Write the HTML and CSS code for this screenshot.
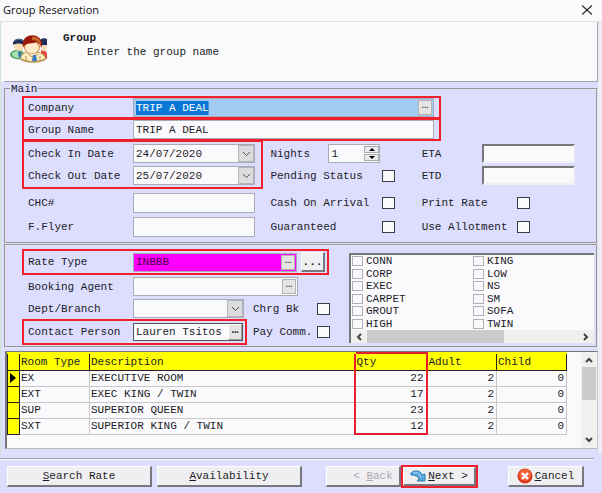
FILE: index.html
```
<!DOCTYPE html>
<html lang="en">
<head>
<meta charset="utf-8">
<title>Group Reservation</title>
<link rel="stylesheet" href="styles.css">
</head>
<body>
<div class="window">
  <header class="titlebar">
    <h1>Group Reservation</h1>
    <button class="close" type="button" aria-label="Close"><svg width="10" height="10" viewBox="0 0 10 10"><path d="M0 .5 10 9.500M10 .5 0 9.500" fill="none" stroke="#222" stroke-width="1.200"/></svg></button>
  </header>
  <div class="frame">
    <section class="intro">
      <svg class="people" width="37" height="28" viewBox="0 0 37 28" aria-hidden="true">
        <path d="M0 20c0-3 3-5 8-5s7 3 7 8c-4 2-13 2-15-3z" fill="#4da566"/>
        <path d="M2 20c0-3 3-4 6-4l3 6c-3 2-7 1-9-2z" fill="#a8dfb0"/>
        <circle cx="9" cy="11" r="5" fill="#f9dcb4"/>
        <path d="M3 10C2 2 14 2 15 8l-1 2c-3-2-8-2-11 0z" fill="#1c2f5c"/>
        <path d="M5 6c2-2 6-2 8 0" fill="none" stroke="#5470a0"/>
        <path d="M8 17l1 6 3-1-2-5z" fill="#2a74bd"/>
        <path d="M31 15c3 0 5 1 6 3v6h-6z" fill="#e04a3c"/>
        <path d="M31 7h6v8l-5 1z" fill="#f9dcb8"/>
        <path d="M30 5c2-2 5-2 7-1v6l-7 0z" fill="#1c2f5c"/>
        <path d="M10 24c0-5 4-8 12-8s14 3 14 8c-3 5-23 5-26 0z" fill="#b89a50"/>
        <path d="M11 23c1-4 4-6 11-6s11 2 13 6c-4 4-20 4-24 0z" fill="#fbecc4"/>
        <ellipse cx="22" cy="12" rx="8" ry="7" fill="#c9763c"/>
        <ellipse cx="22" cy="12.500" rx="7" ry="6" fill="#feeaca"/>
        <path d="M13 12C10-2 31-4 32 9c0 1 0 2-1 4 0-3-2-5-4-6-5 2-10 0-14 5z" fill="#9a1a08"/>
        <path d="M22 2c5-1 9 2 9 8-2-3-5-5-9-5z" fill="#c8652a"/>
        <path d="M18 19l4 3 6-3M16 21v5M30 21v5" fill="none" stroke="#b5954c"/>
        <path d="M23 20h3l1 6h-5z" fill="#357cc5"/>
      </svg>
      <div>
        <h2>Group</h2>
        <p>Enter the group name</p>
      </div>
    </section>

    <form class="form">
      <fieldset class="panel main">
        <legend>Main</legend>
        <div class="row wide callout">
          <label for="company">Company</label>
          <span class="field picked"><input id="company" type="text" value="TRIP A DEAL"><button type="button" class="more" aria-label="Find company">&hellip;</button></span>
        </div>
        <div class="row wide callout joined">
          <label for="gname">Group Name</label>
          <span class="field"><input id="gname" type="text" value="TRIP A DEAL"></span>
        </div>
        <div class="columns">
          <div class="stack callout joined dates">
            <div class="row"><label for="cin">Check In Date</label><span class="field"><select id="cin"><option>24/07/2020</option></select><span class="arrow"><svg width="9" height="6" viewBox="0 0 9 6"><path d="M1 1l3.500 3.500L8 1"/></svg></span></span></div>
            <div class="row"><label for="cout">Check Out Date</label><span class="field"><select id="cout"><option>25/07/2020</option></select><span class="arrow"><svg width="9" height="6" viewBox="0 0 9 6"><path d="M1 1l3.500 3.500L8 1"/></svg></span></span></div>
          </div>
          <div class="stack plain">
            <div class="row"><label for="nights">Nights</label><span class="field spin"><input id="nights" type="text" value="1"><span class="steps"><button type="button" aria-label="More nights"><svg width="6" height="3"><path d="M0 3l3-3 3 3z"/></svg></button><button type="button" aria-label="Fewer nights"><svg width="6" height="3"><path d="M0 0l3 3 3-3z"/></svg></button></span></span></div>
            <div class="row"><label for="pending">Pending Status</label><input id="pending" type="checkbox"></div>
          </div>
          <div class="stack plain eta">
            <div class="row"><label for="eta">ETA</label><input class="sunken" id="eta" type="text"></div>
            <div class="row"><label for="etd">ETD</label><input class="sunken" id="etd" type="text"></div>
          </div>
          <div class="stack lower first">
            <div class="row"><label for="chc">CHC#</label><span class="field"><input id="chc" type="text"></span></div>
            <div class="row"><label for="flyer">F.Flyer</label><span class="field"><input id="flyer" type="text"></span></div>
          </div>
          <div class="stack lower">
            <div class="row"><label for="cash">Cash On Arrival</label><input id="cash" type="checkbox"></div>
            <div class="row"><label for="guar">Guaranteed</label><input id="guar" type="checkbox"></div>
          </div>
          <div class="stack lower extras">
            <div class="row"><label for="print">Print Rate</label><input id="print" type="checkbox"></div>
            <div class="row"><label for="allot">Use Allotment</label><input id="allot" type="checkbox"></div>
          </div>
        </div>
      </fieldset>

      <section class="panel rates">
        <div class="ratefields">
          <div class="row callout rate">
            <label for="rate">Rate Type</label>
            <span class="field magenta"><input id="rate" type="text" value="INBBB"><button type="button" class="more" aria-label="Find rate">&hellip;</button></span>
            <button type="button" class="raised dots" aria-label="Rate details">...</button>
          </div>
          <div class="row agent">
            <label for="agent">Booking Agent</label>
            <span class="field"><input id="agent" type="text"><button type="button" class="more" aria-label="Find agent">&hellip;</button></span>
          </div>
          <div class="pair dept">
            <div class="row"><label for="dept">Dept/Branch</label><span class="field"><select id="dept"><option></option></select><span class="arrow"><svg width="9" height="6" viewBox="0 0 9 6"><path d="M1 1l3.500 3.500L8 1"/></svg></span></span></div>
            <label for="chrg">Chrg Bk</label><input id="chrg" type="checkbox">
          </div>
          <div class="pair">
            <div class="row callout contact"><label for="contact">Contact Person</label><span class="field dark"><input id="contact" type="text" value="Lauren Tsitos"><button type="button" class="more" aria-label="Find contact">&hellip;</button></span></div>
            <label for="pay">Pay Comm.</label><input id="pay" type="checkbox">
          </div>
        </div>
        <div class="listbox">
          <div class="options">
            <label><input type="checkbox">CONN</label><label><input type="checkbox">CORP</label><label><input type="checkbox">EXEC</label><label><input type="checkbox">CARPET</label><label><input type="checkbox">GROUT</label><label><input type="checkbox">HIGH</label>
            <label><input type="checkbox">KING</label><label><input type="checkbox">LOW</label><label><input type="checkbox">NS</label><label><input type="checkbox">SM</label><label><input type="checkbox">SOFA</label><label><input type="checkbox">TWIN</label>
          </div>
          <div class="hscroll"><svg width="6" height="8"><path d="M5 1L2 4l3 3"/></svg><span class="track"><span class="thumb"></span></span><svg width="6" height="8"><path d="M1 1l3 3-3 3"/></svg></div>
        </div>
      </section>

      <section class="gridbox">
        <div class="tablearea">
          <table>
            <colgroup><col class="c-mark"><col class="c-type"><col><col class="c-qty"><col class="c-num"><col class="c-num"></colgroup>
            <thead><tr><th></th><th>Room Type</th><th>Description</th><th class="qty">Qty</th><th>Adult</th><th>Child</th></tr></thead>
            <tbody>
              <tr><th><svg width="6" height="10"><path d="M0 0l6 5-6 5z"/></svg></th><td>EX</td><td>EXECUTIVE ROOM</td><td class="num qty">22</td><td class="num">2</td><td class="num">0</td></tr>
              <tr><th></th><td>EXT</td><td>EXEC KING / TWIN</td><td class="num qty">17</td><td class="num">2</td><td class="num">0</td></tr>
              <tr><th></th><td>SUP</td><td>SUPERIOR QUEEN</td><td class="num qty">23</td><td class="num">2</td><td class="num">0</td></tr>
              <tr><th></th><td>SXT</td><td>SUPERIOR KING / TWIN</td><td class="num qty">12</td><td class="num">2</td><td class="num">0</td></tr>
            </tbody>
          </table>
        </div>
        <div class="vscroll"><svg width="8" height="6"><path d="M1 5l3-3 3 3"/></svg><span class="track"><span class="thumb"></span></span><svg width="8" height="6"><path d="M1 1l3 3 3-3"/></svg></div>
      </section>
    </form>
  </div>

  <footer class="actions">
    <button class="raised large" type="button"><span><u>S</u>earch Rate</span></button>
    <button class="raised large avail" type="button"><span><u>A</u>vailability</span></button>
    <div class="steps-nav">
      <button class="raised back" type="button" disabled><span>&lt; <u>B</u>ack</span></button>
      <span class="callout nextbox"><button class="raised" type="button"><svg width="16" height="12" viewBox="0 0 16 12"><path d="M1 3C3 1 7 0 10 2c1 1 2 2 2 3l3-1v7H7l2-2C8 6 5 5 1 5z" fill="#58a9de" stroke="#2f7fb4"/><path d="M3 3c4-1 7 0 8 5" fill="none" stroke="#a8daf5"/></svg><span><u>N</u>ext &gt;</span></button></span>
    </div>
    <button class="raised cancel" type="button"><svg width="16" height="16" viewBox="0 0 16 16"><circle cx="8" cy="8" r="7.500" fill="#d83416"/><circle cx="8" cy="7" r="6" fill="#f0643c"/><path d="M5 5l6 6M11 5l-6 6" stroke="#fff" stroke-width="2.400"/></svg><span><u>C</u>ancel</span></button>
  </footer>
</div>
</body>
</html>
```
FILE: styles.css
```
* { box-sizing: border-box; }
body {
  margin: 0;
  background: #dddefe;
  color: #1c1c28;
  font: 11px/14px "Liberation Mono", monospace;
}
h1, h2, p { margin: 0; font-size: 11px; }
input, button, select { font: inherit; color: inherit; margin: 0; padding: 0; border: 0; border-radius: 0; min-width: 0; background: none; }
svg { display: block; flex: none; }
.window { min-height: 100vh; display: flex; flex-direction: column; }

.titlebar { height: 22px; display: flex; align-items: center; justify-content: space-between; padding: 0 10px 2px 3px; background: #fafafc; border-bottom: 1px solid #e4e4d2; }
.titlebar h1 { font: 11px/16px "Open Sans", sans-serif; color: #111; }
.close { width: 10px; height: 10px; }

.frame { border-left: 1px solid #cfe6d2; border-right: 4px solid #eeedf5; }
.intro { display: flex; gap: 16px; height: 60px; margin-left: 3px; padding: 9px 6px; background: #fafafc; border-bottom: 1px solid #a4a4ac; border-right: 1px solid #a4a4ac; box-shadow: -3px 0 #fafafc; }
.intro .people { margin-top: 4px; }
.intro p { padding-left: 24px; }

.panel { margin: 0 0 0 3px; border: 2px groove #e4e4f0; min-width: 0; }
.main { padding: 0 0 5px 16px; }
.main legend { margin-left: -12px; padding: 0 1px; height: 14px; }
.callout { border: 2px solid #f0202c; }
.row { display: flex; align-items: center; }
.row > label { flex: none; width: 105px; }
.wide { height: 23px; margin-right: 155px; padding: 0 5px 0 4px; }
.joined { margin-top: -1px; }
.field { flex: 1; min-width: 0; display: flex; align-items: stretch; height: 19px; background: #fafafc; border: 1px solid #a9abb8; }
.field input, .field select { flex: 1; width: 0; height: 100%; padding-left: 2px; appearance: none; outline: 0; }
.more { width: 14px; margin: 1px; padding-bottom: 5px; background: #e4e4e4; border: 1px solid #b4b4b4; line-height: 8px; }
.picked { background: #a3caf0; }
.picked input { color: #fff; background: linear-gradient(#0a78d6, #0a78d6) 2px 50% / 11ch 14px no-repeat; }
.arrow { width: 16px; display: grid; place-items: center; background: #dcdcdf; border: 1px solid #b4b4ba; pointer-events: none; }
.arrow path { fill: none; stroke: #555; }

.columns { display: grid; grid-template-columns: 241fr 151fr 181fr; }
.stack { display: grid; gap: 3px; align-content: start; }
.stack .row > label { width: 112px; }
.dates .row > label, .first .row > label { width: 105px; }
.eta .row > label { width: 60px; }
.extras .row > label { width: 95px; }
.dates { padding: 2px 6px 2px 4px; }
.plain { padding: 3px 0 0 7px; }
.plain .row { height: 19px; }
.lower { gap: 4px; padding: 4px 0 0 7px; }
.first { padding: 4px 8px 0 6px; }
.lower .field, .lower .row { height: 20px; }
.spin { flex: none; width: 52px; margin-left: -54px; }
.steps { width: 15px; display: grid; gap: 1px; padding: 1px 0; }
.steps button { display: grid; place-items: center; background: #ececee; border: 1px solid #aaa; }
.sunken { width: 93px; height: 19px; background: #fafafc; border: 2px solid #f0f0f6; border-top-color: #777; border-left-color: #777; appearance: none; }
input[type="checkbox"] { appearance: none; flex: none; width: 13px; height: 12px; border: 1px solid #3c3c44; background: #fafafc; }

.rates { display: flex; justify-content: space-between; padding: 3px 2px 1px 16px; }
.ratefields { flex: none; width: 308px; }
.rate { width: 307px; height: 26px; padding: 0 2px 0 4px; }
.rate .raised { width: 24px; height: 20px; margin-left: 4px; font-weight: bold; }
.magenta { background: #f0f; }
.magenta input { color: #4b004b; }
.agent { margin: 2px 32px 0 0; padding-left: 6px; }
.pair { display: grid; grid-template-columns: 225px 1fr 13px; align-items: center; column-gap: 6px; white-space: nowrap; }
.pair > label { width: 56px; }
.dept { margin: 3px 0 1px; }
.dept .row { padding: 0 3px 0 6px; }
.contact { height: 26px; padding: 0 2px 0 4px; }
.dark { height: 18px; border-color: #55555c; }
.contact .more { margin: 0; border-color: #fff #999 #999 #fff; font-weight: bold; }

.listbox { flex: 1; display: flex; flex-direction: column; margin: 4px 0 0 19px; height: 90px; background: #fafafc; border-top: 2px solid #777; border-left: 2px solid #777; }
.options { flex: 1; display: grid; grid-template-rows: repeat(6, 1fr); grid-auto-flow: column; grid-auto-columns: 1fr; padding-left: 1px; line-height: 12px; }
.options label { display: flex; align-items: center; gap: 3px; }
.options input[type="checkbox"] { width: 11px; height: 10px; border-color: #b0b0b6; }
.hscroll { height: 13px; display: flex; align-items: center; gap: 5px; padding: 0 5px; background: #f0f0ee; }
.hscroll .track { flex: 1; height: 100%; }
.hscroll .thumb { display: block; width: 65%; height: 100%; background: #cbcbcb; }
.hscroll path, .vscroll path { fill: none; stroke: #444; stroke-width: 2; }

.gridbox { display: flex; margin: 3px 0 4px 4px; height: 98px; background: #fafafc; border: 1px solid #777780; border-left-width: 2px; border-right-color: #c6c6c8; border-bottom-color: #bbb; }
.tablearea { flex: 1; padding-right: 14px; }
table { width: 100%; table-layout: fixed; border-collapse: collapse; }
.c-mark { width: 12px; }
.c-type { width: 70px; }
.c-qty { width: 72px; }
.c-num { width: 70px; }
th, td { height: 16px; padding: 0 2px 0 1px; text-align: left; font-weight: normal; line-height: 14px; white-space: nowrap; border: 1px solid #c8c8ca; }
th { background: #ff0; border-color: #222; }
thead th { height: 17px; border-top: 2px solid #ff0; }
tbody th { padding: 0 2px; }
.num { text-align: right; }
.qty { border-left: 2px solid #e8202c; border-right: 2px solid #e8202c; }
thead .qty { border-top-color: #e8202c; }
tbody tr:last-child .qty { border-bottom: 2px solid #e8202c; }
.vscroll { width: 16px; display: flex; flex-direction: column; align-items: center; gap: 4px; padding: 5px 1px; background: #f0f0ee; }
.vscroll .track { flex: 1; width: 100%; }
.vscroll .thumb { display: block; width: 100%; height: 50%; background: #cbcbcb; }

.actions { display: flex; align-items: center; margin-right: 8px; padding: 6px 10px 2px 7px; border-top: 1px solid #a4a4ac; margin-top: 5px; box-shadow: inset 0 1px #fafafc; }
.raised { height: 21px; display: flex; align-items: center; justify-content: center; gap: 2px; background: #efeff1; border: 1px solid #fff; border-right: 2px solid #77777f; border-bottom: 2px solid #77777f; }
.large { flex: 1; max-width: 145px; }
.avail { margin-left: 5px; }
.steps-nav { display: flex; align-items: center; margin-left: auto; }
.back { width: 75px; color: #aaaab0; padding-left: 20px; }
.nextbox { width: 77px; }
.nextbox .raised { width: 100%; height: 19px; }
.cancel { width: 76px; margin-left: 30px; }
```
